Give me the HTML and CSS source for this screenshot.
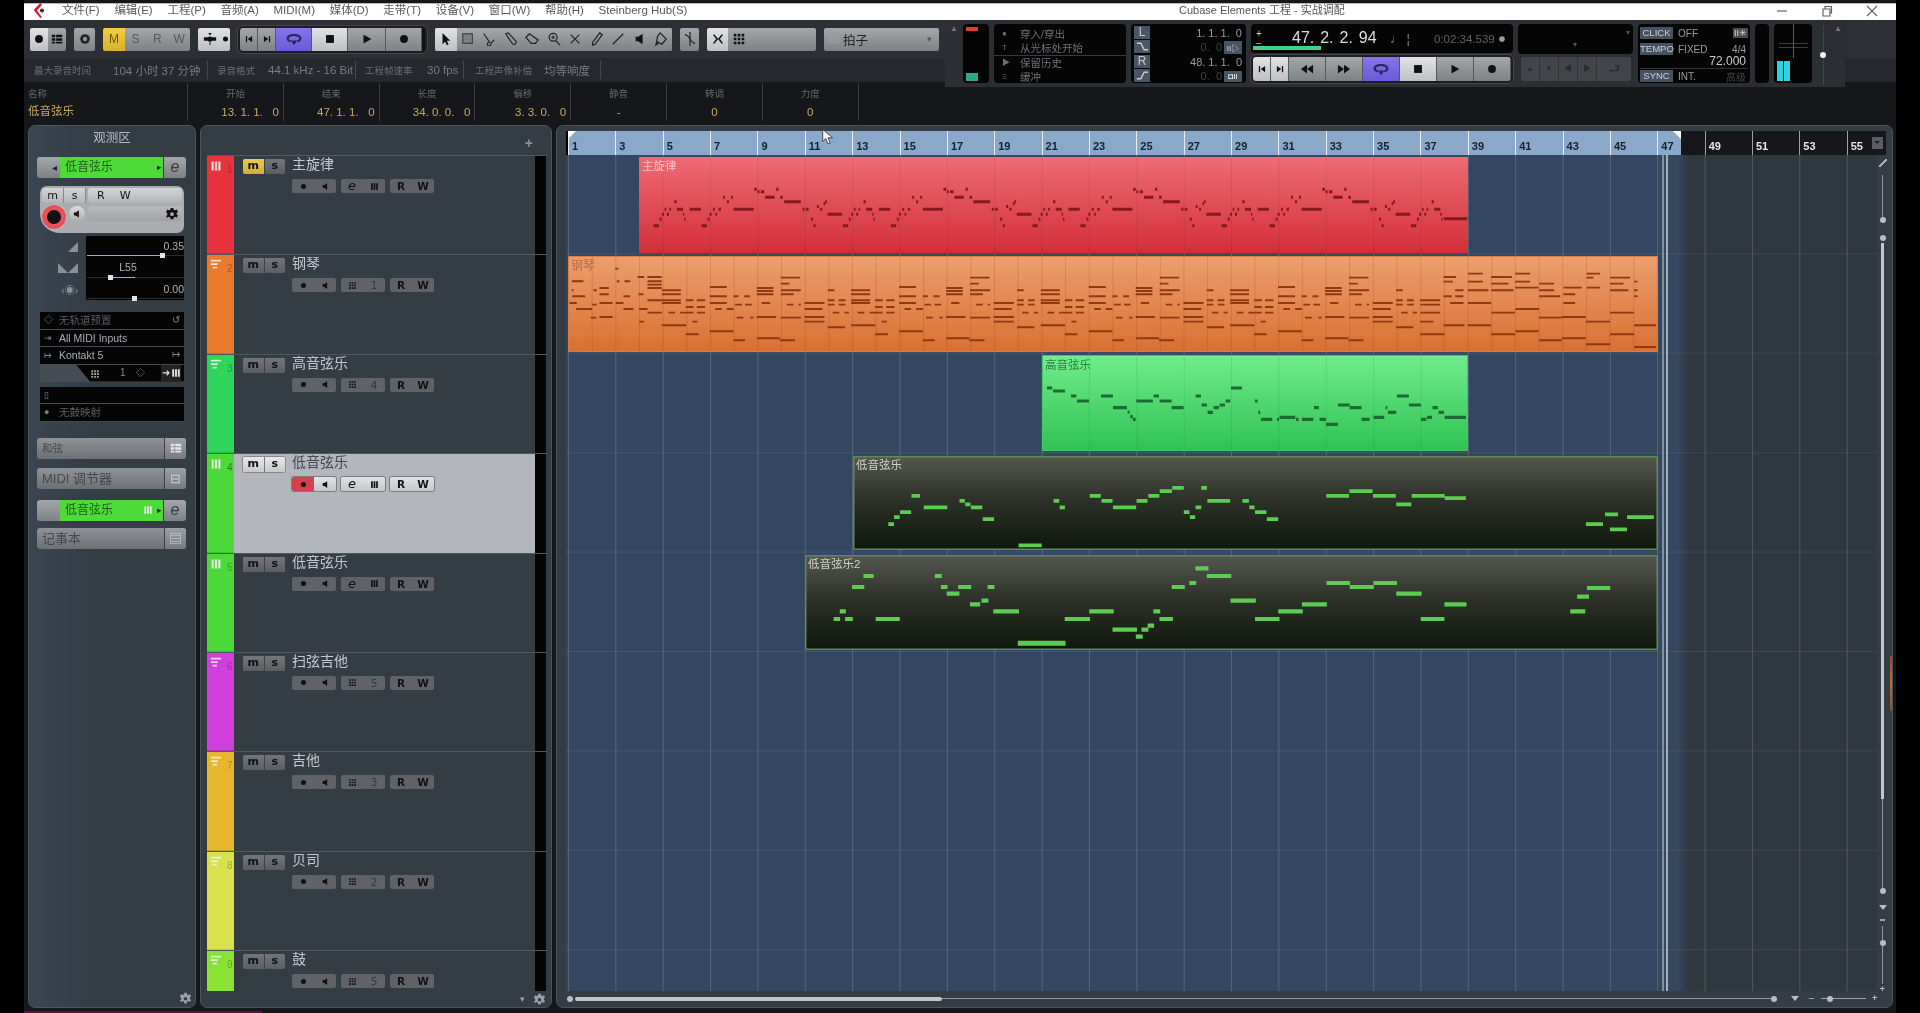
FILE: index.html
```html
<!DOCTYPE html>
<html lang="zh-CN">
<head>
<meta charset="utf-8">
<title>Cubase Elements 工程 - 实战调配</title>
<link rel="stylesheet" href="styles.css">
</head>
<body>
<svg class="sprite" aria-hidden="true">
  <symbol id="rec" viewBox="0 0 16 16"><circle cx="8" cy="8" r="4.5"/></symbol>
  <symbol id="stop" viewBox="0 0 16 16"><rect x="3.5" y="3.5" width="9" height="9"/></symbol>
  <symbol id="play" viewBox="0 0 16 16"><path d="M4 3l9 5-9 5z"/></symbol>
  <symbol id="prev" viewBox="0 0 16 16"><path d="M3 3h2v10H3zM13 3v10L6 8z"/></symbol>
  <symbol id="next" viewBox="0 0 16 16"><path d="M13 3h-2v10h2zM3 3v10l7-5z"/></symbol>
  <symbol id="rew" viewBox="0 0 16 16"><path d="M8 3v10L1 8zM15 3v10L8 8z"/></symbol>
  <symbol id="ff" viewBox="0 0 16 16"><path d="M8 3v10l7-5zM1 3v10l7-5z"/></symbol>
  <symbol id="loop" viewBox="0 0 20 16"><path d="M10 2C5 2 2 4 2 7c0 2 2 3.500 4 4l1-2C5.500 8.600 4.500 8 4.500 7c0-1.500 2.500-2.700 5.500-2.700s5.500 1.200 5.500 2.700c0 1-1 1.600-2.500 2l1 2c2-.5 4-2 4-4 0-3-3-5-8-5zM6.500 9h7L10 14z"/></symbol>
  <symbol id="mon" viewBox="0 0 16 16"><path d="M11 2v12L6 10.500H3v-5h3z"/></symbol>
  <symbol id="keys" viewBox="0 0 16 16"><path d="M2 2h3v12H2zM6.500 2h3v12h-3zM11 2h3v12h-3z"/></symbol>
  <symbol id="grid" viewBox="0 0 16 16"><path d="M2 2h3v3H2zM6.500 2h3v3h-3zM11 2h3v3h-3zM2 6.500h3v3H2zM6.500 6.500h3v3h-3zM11 6.500h3v3h-3zM2 11h3v3H2zM6.500 11h3v3h-3zM11 11h3v3h-3z"/></symbol>
  <symbol id="lines" viewBox="0 0 14 16"><path d="M1 2h12v2H1zM1 6h8v2H1zM3 10h5v2H3z"/></symbol>
  <symbol id="gear" viewBox="0 0 16 16"><path fill-rule="evenodd" d="M6.500 1h3l.4 2 1.700.8 1.800-1 1.500 2.500-1.500 1.200v2l1.500 1.200-1.500 2.500-1.800-1-1.700.8-.4 2h-3l-.4-2-1.700-.8-1.800 1L1.100 10.700l1.500-1.200v-2L1.100 5.300l1.500-2.500 1.800 1 1.700-.8zM8 6a2.200 2.200 0 100 4.400A2.200 2.200 0 008 6z"/></symbol>
  <symbol id="pointer" viewBox="0 0 16 16"><path d="M4 1v13l3-3 2 4 2-1-2-4h4z"/></symbol>
  <symbol id="bars" viewBox="0 0 16 16"><path d="M2 3h4v3H2zM7 3h7v3H7zM2 7h4v3H2zM7 7h7v3H7zM2 11h4v2H2zM7 11h7v2H7z"/></symbol>
</svg>

<div class="app">
  <header class="titlebar">
    <svg class="logo" viewBox="0 0 16 18"><path class="logo-red" d="M9 0L1 8.500 9 18l2-1-6-8 6-7z"/><circle class="logo-dark" cx="11" cy="9" r="2.500"/></svg>
    <nav class="menu">
      <span>文件(F)</span><span>编辑(E)</span><span>工程(P)</span><span>音频(A)</span><span>MIDI(M)</span><span>媒体(D)</span><span>走带(T)</span><span>设备(V)</span><span>窗口(W)</span><span>帮助(H)</span><span>Steinberg Hub(S)</span>
    </nav>
    <div class="doc-title">Cubase Elements 工程 - 实战调配</div>
    <div class="win">
      <svg viewBox="0 0 12 12"><path d="M1 6h10"/></svg>
      <svg viewBox="0 0 12 12"><path d="M2 4h7v7H2zM4 4V1.500h6.500V8H9"/></svg>
      <svg viewBox="0 0 12 12"><path d="M1 1l10 10M11 1L1 11"/></svg>
    </div>
  </header>

  <section class="toolbar">
    <div class="tg g1"><b class="lt"><svg class="ic"><use href="#rec"/></svg></b><b class="md"><svg class="ic"><use href="#bars"/></svg></b></div>
    <div class="tg g2"><b class="md"><svg class="ic ring" viewBox="0 0 16 16"><circle cx="8" cy="8" r="5.500"/><circle class="f" cx="8" cy="8" r="2.500"/></svg></b></div>
    <div class="tg g3"><b class="yl">M</b><b class="md txt">S</b><b class="md txt">R</b><b class="md txt">W</b></div>
    <div class="tg g4"><b class="lt grow"><svg class="ic" viewBox="0 0 16 16"><path d="M6 1h4L8 4zM1 6h5v4H1zM10 6h5v4h-5zM8 5a3 3 0 110 6 3 3 0 010-6zM7.500 11h1v4h-1z"/></svg></b><b class="lt s"><svg class="ic small"><use href="#rec"/></svg></b></div>
    <div class="transport-frame tf1">
      <b class="md w18"><svg class="ic small"><use href="#prev"/></svg></b><b class="md w18"><svg class="ic small"><use href="#next"/></svg></b><b class="pu w36"><svg class="ic wide"><use href="#loop"/></svg></b><b class="lt w36"><svg class="ic"><use href="#stop"/></svg></b><b class="md w38"><svg class="ic"><use href="#play"/></svg></b><b class="md w36"><svg class="ic"><use href="#rec"/></svg></b>
    </div>
    <div class="tg tools">
      <b class="lt w22"><svg class="ic"><use href="#pointer"/></svg></b>
      <b class="md"><svg class="ic st" viewBox="0 0 16 16"><rect class="f2" x="2" y="2" width="11" height="11"/></svg></b>
      <b class="md"><svg class="ic st" viewBox="0 0 16 16"><path d="M2 2l7 10M14 9l-4 4a2 2 0 11-1-1"/></svg></b>
      <b class="md"><svg class="ic st" viewBox="0 0 16 16"><path d="M2 2l3-1 9 10-1 3-3 0z"/></svg></b>
      <b class="md"><svg class="ic st" viewBox="0 0 16 16"><path d="M1 6l4-4 10 7-3 4H7z"/></svg></b>
      <b class="md"><svg class="ic st" viewBox="0 0 16 16"><circle cx="7" cy="6" r="4.500"/><path d="M10 10l5 5M5 6h4M7 4v4"/></svg></b>
      <b class="md"><svg class="ic st" viewBox="0 0 16 16"><path d="M3 3l10 10M13 3L3 13"/></svg></b>
      <b class="md"><svg class="ic st" viewBox="0 0 16 16"><path d="M11 1l3 2-8 11-3 1 0-3z"/></svg></b>
      <b class="md"><svg class="ic st" viewBox="0 0 16 16"><path d="M2 14L14 2"/></svg></b>
      <b class="md"><svg class="ic"><use href="#mon"/></svg></b>
      <b class="md"><svg class="ic st" viewBox="0 0 16 16"><path d="M7 1l7 7-5 6-6-3 1-6zM3 11l-1 4 3-2"/></svg></b>
    </div>
    <div class="tg g7"><b class="md"><svg class="ic st" viewBox="0 0 16 16"><path d="M8 0v16M2 3c6 0 6 10 12 10"/></svg></b></div>
    <div class="tg g8"><b class="lt w21"><svg class="ic st2" viewBox="0 0 16 16"><path d="M3 3l4 5-4 5M13 3L9 8l4 5"/></svg></b><b class="md w21"><svg class="ic"><use href="#grid"/></svg></b><b class="md grow fade">⊟ ⊖ ⊤ ▾</b></div>
    <div class="dropdown"><svg class="ic pale"><use href="#grid"/></svg><span>拍子</span><i>▾</i></div>
  </section>

  <section class="statusbar">
    <span class="lb">最大录音时间</span><span class="vl">104 小时 37 分钟</span><u></u>
    <span class="lb">录音格式</span><span class="vl">44.1 kHz - 16 Bit</span><u></u>
    <span class="lb">工程帧速率</span><span class="vl">30 fps</span><u></u>
    <span class="lb">工程声像补偿</span><span class="vl">均等响度</span><u></u>
  </section>

  <section class="infobar">
    <div class="cell first"><small>名称</small><strong>低音弦乐</strong></div>
    <div class="cell"><small>开始</small><strong>13. 1. 1.&nbsp;&nbsp; 0</strong></div>
    <div class="cell"><small>结束</small><strong>47. 1. 1.&nbsp;&nbsp; 0</strong></div>
    <div class="cell"><small>长度</small><strong>34. 0. 0.&nbsp;&nbsp; 0</strong></div>
    <div class="cell"><small>偏移</small><strong>3. 3. 0.&nbsp;&nbsp; 0</strong></div>
    <div class="cell mid"><small>静音</small><strong>-</strong></div>
    <div class="cell mid"><small>转调</small><strong>0</strong></div>
    <div class="cell mid"><small>力度</small><strong>0</strong></div>
  </section>

  <aside class="transport">
    <i class="up">▲</i>
    <div class="box vu"><em class="vu-red"></em><em class="vu-green"></em></div>
    <div class="box markers">
      <p><i>●</i>穿入/穿出</p><p><i>T</i>从光标处开始</p><hr>
      <p><i>▶</i>保留历史</p><p><i>Ξ</i>缓冲</p>
    </div>
    <div class="box locators">
      <div class="lrow"><span class="tag">L</span><span class="tc">1. 1. 1.&nbsp; 0</span></div>
      <div class="lrow dim"><span class="tag"><svg class="ic st2" viewBox="0 0 16 16"><path d="M1 4h5l4 8h5"/></svg></span><span class="tc">0.&nbsp; 0</span><span class="mini">II▷</span></div>
      <div class="lrow sep"><span class="tag">R</span><span class="tc">48. 1. 1.&nbsp; 0</span></div>
      <div class="lrow dim"><span class="tag"><svg class="ic st2" viewBox="0 0 16 16"><path d="M1 12h5l4-8h5"/></svg></span><span class="tc">0.&nbsp; 0</span><span class="mini lit">◘II</span></div>
    </div>
    <div class="maincol">
      <div class="box readout">
        <span class="pm">+<br>−</span><span class="big">47. 2. 2. 94</span><span class="nt">♩ ¦</span><span class="secs">0:02:34.539</span><svg class="ic small pale"><use href="#rec"/></svg>
        <em class="progress"></em>
      </div>
      <div class="transport-frame tf2">
        <b class="lt w18"><svg class="ic small"><use href="#prev"/></svg></b><b class="lt w18"><svg class="ic small"><use href="#next"/></svg></b><b class="md w37"><svg class="ic"><use href="#rew"/></svg></b><b class="md w37"><svg class="ic"><use href="#ff"/></svg></b><b class="pu w37"><svg class="ic wide"><use href="#loop"/></svg></b><b class="lt w37"><svg class="ic"><use href="#stop"/></svg></b><b class="md w37"><svg class="ic"><use href="#play"/></svg></b><b class="md w37"><svg class="ic"><use href="#rec"/></svg></b>
      </div>
    </div>
    <div class="sidecol">
      <div class="box arrows"><i>▾</i><i class="c">▾</i></div>
      <div class="darkbtns"><b>▲</b><b>▼</b><b>◀</b><b>▶</b><b class="wide2">⮐</b></div>
    </div>
    <div class="box clicks">
      <div class="crow"><span class="ctag">CLICK</span><span>OFF</span><span class="ckey">II✳</span></div>
      <div class="crow tempo"><span class="ctag">TEMPO</span><span>FIXED</span><span class="fr">4/4</span></div>
      <div class="bpm">72.000</div>
      <div class="crow sync"><span class="ctag">SYNC</span><span>INT.</span><span class="fr dimmer">高级</span></div>
    </div>
    <div class="box blank"></div>
    <div class="box outmeter"><em></em><em></em></div>
    <div class="vol"><em></em></div>
    <i class="up">▲</i>
  </aside>

  <main class="work">
    <aside class="panel inspector">
      <h2>观测区</h2>
      <div class="irow"><span class="tab dgray">◂</span><span class="greenlab">低音弦乐<i>▸</i></span><span class="tab e">e</span></div>
      <div class="channel">
        <div class="ch-ms"><b>m</b><b>s</b></div>
        <div class="ch-rw"><b>R</b><b>W</b></div>
        <div class="ch-rec"><span class="bigrec"></span><span class="mon"><svg class="ic small"><use href="#mon"/></svg></span></div>
        <div class="ch-bar"><svg class="ic"><use href="#gear"/></svg></div>
      </div>
      <div class="faders">
        <div class="fcol"><span>◢</span><span>◣◢</span><span>‹◉›</span></div>
        <div class="fbox">
          <div class="fd"><span class="fv">0.35</span><div class="tr"><em class="fill f1"></em></div></div>
          <div class="fd"><span class="fv ctr">L55</span><div class="tr"><em class="fill f2b"></em></div></div>
          <div class="fd"><span class="fv">0.00</span><div class="tr"><em class="fill f3"></em></div></div>
        </div>
      </div>
      <div class="ilist">
        <div class="li dimt"><i>◇</i>无轨道预置<span>↺</span></div>
        <div class="li"><i>⇥</i>All MIDI Inputs</div>
        <div class="li"><i>↦</i>Kontakt 5<span>↦</span></div>
        <div class="li notch"><svg class="ic small pale"><use href="#grid"/></svg><span class="n">1</span><i>◇</i><span class="arrowk">➜<svg class="ic small wt"><use href="#keys"/></svg></span></div>
      </div>
      <div class="ilist second">
        <div class="li"><i>▯</i></div>
        <div class="li dimt"><i>●</i>无鼓映射</div>
      </div>
      <div class="sec sm"><span>和弦</span><b><svg class="ic wt"><use href="#bars"/></svg></b></div>
      <div class="sec"><span>MIDI 调节器</span><b>⊟</b></div>
      <div class="irow sec-g"><span class="tab"></span><span class="greenlab">低音弦乐<svg class="ic small wt"><use href="#keys"/></svg><i>▸</i></span><span class="tab e">e</span></div>
      <div class="sec after-g"><span>记事本</span><b>▤</b></div>
      <svg class="ic gear in-g"><use href="#gear"/></svg>
    </aside>

    <section class="panel tracks">
      <div class="th"><span>+</span></div>
      <div class="tlist">
        <article class="track"><div class="strip c1"><svg class="ic si"><use href="#keys"/></svg><span>1</span></div><div class="tc-body"><div class="r1"><div class="ms"><b class="on">m</b><b>s</b></div><span class="tname">主旋律</span></div><div class="r2"><div class="bt"><b><svg class="ic small"><use href="#rec"/></svg></b><b><svg class="ic small"><use href="#mon"/></svg></b></div><div class="bt"><b class="lc">e</b><b><svg class="ic small"><use href="#keys"/></svg></b></div><div class="bt"><b>R</b><b>W</b></div></div></div><div class="tblack"></div></article>
        <article class="track"><div class="strip c2"><svg class="ic si"><use href="#lines"/></svg><span>2</span></div><div class="tc-body"><div class="r1"><div class="ms"><b>m</b><b>s</b></div><span class="tname">钢琴</span></div><div class="r2"><div class="bt"><b><svg class="ic small"><use href="#rec"/></svg></b><b><svg class="ic small"><use href="#mon"/></svg></b></div><div class="bt"><b><svg class="ic small"><use href="#grid"/></svg></b><b class="num">1</b></div><div class="bt"><b>R</b><b>W</b></div></div></div><div class="tblack"></div></article>
        <article class="track"><div class="strip c3"><svg class="ic si"><use href="#lines"/></svg><span>3</span></div><div class="tc-body"><div class="r1"><div class="ms"><b>m</b><b>s</b></div><span class="tname">高音弦乐</span></div><div class="r2"><div class="bt"><b><svg class="ic small"><use href="#rec"/></svg></b><b><svg class="ic small"><use href="#mon"/></svg></b></div><div class="bt"><b><svg class="ic small"><use href="#grid"/></svg></b><b class="num">4</b></div><div class="bt"><b>R</b><b>W</b></div></div></div><div class="tblack"></div></article>
        <article class="track sel"><div class="strip c4"><svg class="ic si"><use href="#keys"/></svg><span>4</span></div><div class="tc-body"><div class="r1"><div class="ms"><b>m</b><b>s</b></div><span class="tname">低音弦乐</span></div><div class="r2"><div class="bt"><b class="armed"><svg class="ic small"><use href="#rec"/></svg></b><b><svg class="ic small"><use href="#mon"/></svg></b></div><div class="bt"><b class="lc">e</b><b><svg class="ic small"><use href="#keys"/></svg></b></div><div class="bt"><b>R</b><b>W</b></div></div></div><div class="tblack"></div></article>
        <article class="track"><div class="strip c4"><svg class="ic si"><use href="#keys"/></svg><span>5</span></div><div class="tc-body"><div class="r1"><div class="ms"><b>m</b><b>s</b></div><span class="tname">低音弦乐</span></div><div class="r2"><div class="bt"><b><svg class="ic small"><use href="#rec"/></svg></b><b><svg class="ic small"><use href="#mon"/></svg></b></div><div class="bt"><b class="lc">e</b><b><svg class="ic small"><use href="#keys"/></svg></b></div><div class="bt"><b>R</b><b>W</b></div></div></div><div class="tblack"></div></article>
        <article class="track"><div class="strip c6"><svg class="ic si"><use href="#lines"/></svg><span>6</span></div><div class="tc-body"><div class="r1"><div class="ms"><b>m</b><b>s</b></div><span class="tname">扫弦吉他</span></div><div class="r2"><div class="bt"><b><svg class="ic small"><use href="#rec"/></svg></b><b><svg class="ic small"><use href="#mon"/></svg></b></div><div class="bt"><b><svg class="ic small"><use href="#grid"/></svg></b><b class="num">5</b></div><div class="bt"><b>R</b><b>W</b></div></div></div><div class="tblack"></div></article>
        <article class="track"><div class="strip c7"><svg class="ic si"><use href="#lines"/></svg><span>7</span></div><div class="tc-body"><div class="r1"><div class="ms"><b>m</b><b>s</b></div><span class="tname">吉他</span></div><div class="r2"><div class="bt"><b><svg class="ic small"><use href="#rec"/></svg></b><b><svg class="ic small"><use href="#mon"/></svg></b></div><div class="bt"><b><svg class="ic small"><use href="#grid"/></svg></b><b class="num">3</b></div><div class="bt"><b>R</b><b>W</b></div></div></div><div class="tblack"></div></article>
        <article class="track"><div class="strip c8"><svg class="ic si"><use href="#lines"/></svg><span>8</span></div><div class="tc-body"><div class="r1"><div class="ms"><b>m</b><b>s</b></div><span class="tname">贝司</span></div><div class="r2"><div class="bt"><b><svg class="ic small"><use href="#rec"/></svg></b><b><svg class="ic small"><use href="#mon"/></svg></b></div><div class="bt"><b><svg class="ic small"><use href="#grid"/></svg></b><b class="num">2</b></div><div class="bt"><b>R</b><b>W</b></div></div></div><div class="tblack"></div></article>
        <article class="track"><div class="strip c9"><svg class="ic si"><use href="#lines"/></svg><span>9</span></div><div class="tc-body"><div class="r1"><div class="ms"><b>m</b><b>s</b></div><span class="tname">鼓</span></div><div class="r2"><div class="bt"><b><svg class="ic small"><use href="#rec"/></svg></b><b><svg class="ic small"><use href="#mon"/></svg></b></div><div class="bt"><b><svg class="ic small"><use href="#grid"/></svg></b><b class="num">5</b></div><div class="bt"><b>R</b><b>W</b></div></div></div><div class="tblack"></div></article>
      </div>
      <div class="tfoot"><i>▾</i><svg class="ic gear"><use href="#gear"/></svg></div>
    </section>

    <section class="panel project">
      <div class="ruler">
        <span>1</span><span>3</span><span>5</span><span>7</span><span>9</span><span>11</span><span>13</span><span>15</span><span>17</span><span>19</span><span>21</span><span>23</span><span>25</span><span>27</span><span>29</span><span>31</span><span>33</span><span>35</span><span>37</span><span>39</span><span>41</span><span>43</span><span>45</span><span>47</span><span class="dk">49</span><span class="dk">51</span><span class="dk">53</span><span class="dk">55</span>
        <i class="loc-l"></i><i class="loc-r"></i><i class="rbtn"></i>
      </div>
      <div class="pbody">
        <div class="canvas">
          <div class="part red"><label>主旋律</label>
            <svg class="notes n-red" viewBox="638.7 156.7 829.3 95.6">
              <defs>
                <path id="ma" d="M280 316H296M298 296H304M305 281H311M313 266H318M320 281H326M327 266H332M342 244H349M350 266H368M368 281H372M372 296H376"/>
                <path id="mb" d="M388 266H422M424 316H440M442 296H448M448 281H454M458 266H464M465 281H470M475 266H482M488 230H494M500 244H506M512 230H518M520 266H580M582 206H590M592 214H598M602 214H612M615 230H643M648 206H655M660 230H668M672 244H722M727 266H733M737 266H745M752 296H758M760 316H766M770 258H776M780 266H786M790 250H795M795 244H800M802 281H846"/>
              </defs>
              <g transform="translate(560 120) scale(.3333)">
                <use href="#ma"/><use href="#mb"/>
                <use href="#ma" x="568"/><use href="#mb" x="568"/>
                <use href="#ma" x="1137"/><use href="#mb" x="1137"/>
                <use href="#ma" x="1705"/><use href="#mb" x="1705"/>
                <use href="#ma" x="2273"/>
                <path d="M2652 295H2722"/>
              </g>
            </svg>
          </div>
          <div class="part orange"><label>钢琴</label>
            <svg class="notes n-org" viewBox="568 255.7 1089.7 96">
              <defs>
                <path id="pm" d="M305 510H362M305 522H362M305 540H362M305 548H362M325 577H345M305 615H378M377 540H400M410 540H435M377 560H400M410 560H435M360 577H400M410 577H435M397 604H412M377 642H415M449 500H500M449 528H500M449 548H500M465 566H485M449 633H520M520 528H535M552 528H570M525 553H545M555 553H575M500 566H520M530 592H550M570 592H580M520 660H555M590 503H640M590 512H640M590 522H640M605 548H630M590 590H648M590 654H660M662 472H720M662 490H688M662 510H722M662 522H700M680 553H700M715 553H722M662 592H722M660 660H705M733 548H793M733 566H787M733 590H793M733 604H793M803 510H823M803 540H823M836 540H856M803 553H823M836 553H856M818 577H838M853 577H866M803 621H855"/>
              </defs>
              <g transform="translate(560 120) scale(.3333)">
                <path d="M35 483H70M35 510H40M36 528H75M28 548H50M48 566H96M95 553H110M92 592H108M118 503H146M118 522H146M118 548H157M118 590H157M100 510H110M165 445H175M167 548H190M190 566H220M170 483H178M193 483H210M190 528H210M232 470H252M262 470H305M262 483H305M262 493H305M262 503H305M262 540H305M237 566H262M262 577H305M237 604H252M235 522H250"/>
                <use href="#pm"/><use href="#pm" x="568"/><use href="#pm" x="1137"/><use href="#pm" x="1705"/>
              </g>
              <g transform="translate(1400 120) scale(.3333)">
                <path d="M60 540H120M60 553H120M60 577H120M60 604H100M60 642H133M130 470H168M130 484H158M130 528H155M165 510H190M165 528H190M150 548H190M130 615H193M203 460H248M203 484H248M203 510H265M203 548H273M203 615H273M273 470H335M273 490H325M273 510H340M273 577H345M273 642H345M345 460H390M345 484H390M345 502H415M345 566H417M345 633H415M417 490H462M417 510H462M417 528H480M417 592H485M417 660H485M490 502H545M490 522H525M490 548H525M485 590H557M485 654H557M560 460H600M560 472H580M560 502H600M557 604H630M557 672H630M630 472H690M630 490H670M630 510H685M630 577H702M630 642H702M702 484H712M702 510H712M702 528H712M702 615H768M702 680H768"/>
              </g>
            </svg>
          </div>
          <div class="part green"><label>高音弦乐</label>
            <svg class="notes n-grn" viewBox="1041.7 355 426 96">
              <g transform="translate(1030 350) scale(.3333)">
                <path d="M50 114H66M68 123H104M122 138H138M140 153H176M212 138H248M248 173H290M292 186H298M300 200H308M308 208H316M318 153H368M370 138H386M388 153H424M424 173H460M496 138H512M514 165H530M532 187H548M550 173H566M568 165H584M586 153H600M602 114H635M674 153H682M684 187H690M692 208H726M740 208H746M748 202H795M797 208H805M815 208H849M851 173H866M868 208H887M887 223H923M923 165H958M958 173H994M994 208H1018M1030 202H1062M1066 173H1071M1073 187H1098M1100 138H1136M1136 165H1172M1172 208H1188M1190 202H1205M1207 173H1223M1225 187H1241M1243 202H1307"/>
              </g>
            </svg>
          </div>
          <div class="part dark p4"><label>低音弦乐</label>
            <svg class="notes n-b4" viewBox="853 455.700 804.700 94.300">
              <g transform="translate(800 450) scale(.4083 .3333)">
                <path d="M213 222H227M227 201H241M242 186H269M270 137H291M300 172H358M388 152H401M402 163H415M416 172H444M445 207H473M533 286H590M619 152H633M634 172H647M708 137H735M737 152H764M765 172H822M823 152H850M852 137H879M880 123H910M911 113H939M939 186H953M954 201H967M968 172H982M982 113H996M997 152H1053M1083 152H1099M1100 172H1113M1114 186H1142M1143 207H1171M1289 137H1345M1346 123H1403M1404 137H1460M1461 163H1498M1499 137H1580M1580 144H1632M1927 222H1969M1974 193H2006M1986 238H2028M2028 201H2094"/>
              </g>
            </svg>
          </div>
          <div class="part dark p5"><label>低音弦乐2</label>
            <svg class="notes n-b5" viewBox="805 555 852.700 95">
              <g transform="translate(800 450) scale(.4083 .3333)">
                <path d="M82 507H98M97 484H112M110 507H129M127 411H157M155 378H180M185 507H244M330 378H347M345 411H361M359 431H390M387 411H419M416 463H441M444 452H461M459 411H476M473 484H536M648 507H710M708 484H768M765 539H825M822 560H839M836 539H853M851 527H867M865 484H882M880 507H913M910 411H942M953 399H970M968 355H1000M996 378H1056M1054 452H1116M1114 507H1174M1171 484H1231M1229 463H1290M1289 399H1347M1346 411H1405M1404 399H1462M1460 431H1522M1520 507H1578M1578 463H1632M1886 484H1923M1903 440H1932M1927 414H1984"/>
                <path class="thick" d="M533 580H650"/>
              </g>
            </svg>
          </div>
          <i class="lline a"></i><i class="lline b"></i>
        </div>
        <div class="vscroll">
          <i class="pen"></i><i class="thin h45"></i><i class="dot"></i><i class="dot m10"></i><i class="thickv"></i><i class="thin h85"></i><i class="dot"></i><i class="tri m8"></i><i class="mn"></i><i class="thin h15 m2"></i><i class="dot"></i><i class="thin h38"></i><i class="pl">+</i>
        </div>
      </div>
      <div class="hscroll">
        <i class="dot"></i><i class="thick-h"></i><i class="thin-h"></i><i class="dot"></i><i class="tri m14"></i><i class="mh"></i><i class="zoomline"><em class="dot"></em></i><span class="pl">+</span>
      </div>
    </section>
  </main>
  <i class="taskstrip"></i>
  <svg class="cursor" viewBox="0 0 16 22"><path d="M1 1v16l4-4 3 7 3-1-3-7h6z"/></svg>
</div>
</body>
</html>
```

FILE: styles.css
```css
*{box-sizing:border-box}
html,body{margin:0;height:100%;background:#000;overflow:hidden}
body{font-family:"Liberation Sans","Noto Sans CJK SC",sans-serif;color:#aaa}
.sprite{display:none}
i{font-style:normal}
em{font-style:normal}
b{font-weight:400}

.app{position:relative;margin-left:24px;width:1872px;height:1013px;background:#15171a;display:flex;flex-direction:column;filter:blur(.45px);overflow:hidden}

/* title bar */
.titlebar{margin-top:3px;height:17px;flex:none;background:#fff;border-top:1px solid #b5b5b5;display:flex;align-items:center;color:#5a5a5a;font-size:11.5px}
.logo{width:15px;height:15px;margin:-4px 0 0 8px}
.logo-red{fill:#c8202c}
.logo-dark{fill:#333}
.menu{display:flex;gap:14.700px;margin:-2px 0 0 15px;align-self:flex-start;align-items:baseline;line-height:17px}
.menu span{white-space:nowrap}
.doc-title{position:absolute;left:1155px;top:2px;font-size:11px;line-height:17px;color:#555}
.win{margin-left:auto;display:flex;gap:33px;padding-right:18px;margin-top:-3px}
.win svg{width:12px;height:12px;fill:none;stroke:#666;stroke-width:1.2}

/* toolbar */
.toolbar{height:38px;flex:none;background:#2c2f33;display:flex;align-items:center;gap:8px;padding-left:6px}
.tg{height:23px;display:flex;overflow:hidden;border-radius:2px}
.tg b{display:flex;align-items:center;justify-content:center}
.ic{width:14px;height:14px;fill:#111}
.ic.small{width:10px;height:10px}
.ic.wide{width:20px;height:15px}
.ic.pale{fill:#9b9ea2}
.ic.wt{fill:#e6e6e6}
.ic.st{fill:none;stroke:#222;stroke-width:1.400}
.ic.st2{fill:none;stroke:#111;stroke-width:1.8}
.ring{fill:#222}
.ring .f{fill:#8b8e92}
.f2{fill:#7b7e82;stroke:#444}
.lt{background:linear-gradient(#e2e3e5,#bdbfc3)}
.md{background:linear-gradient(#a4a7aa,#7e8185)}
.yl{background:linear-gradient(#f0cd45,#d9b02b);color:#6a5510;font-size:12px}
.pu{background:linear-gradient(#8574ea,#6c59d6)}
.pu .ic{fill:#2c2560}
.txt{color:#55585c;font-size:12px}
.grow{flex:1}
.s{width:9px}
.g1{width:36px}.g1 b{flex:1}
.g2{width:21px}.g2 b{flex:1}
.g3{width:87px}.g3 b{flex:1}
.g4{width:32px}
.tools{width:237px;background:#8a8d90}
.tools b{width:21.500px}
.tools .w22{width:22px}
.g7{width:19px}.g7 b{flex:1}
.g8{width:109px}
.w21{width:21px}
.fade{color:#8e9195;font-size:10px;white-space:nowrap}
.dropdown{width:115px;height:23px;border-radius:2px;background:linear-gradient(#a4a7aa,#7e8185);display:flex;align-items:center;padding:0 7px 0 4px;gap:3px;color:#222;font-size:12.500px}
.dropdown .ic{width:12px;height:12px}
.dropdown i{margin-left:auto;color:#555;font-size:9px}
.transport-frame{display:flex;background:#111;border:2px solid #1b1d20;outline:1px solid #42464b;border-radius:5px;overflow:hidden}
.transport-frame b{display:flex;align-items:center;justify-content:center;border-right:1px solid #55585c}
.tf1{width:189px;height:27px}
.tf2{height:28px;padding:0}
.w18{width:18px}.w36{width:36px}.w37{width:37px}.w38{width:38px}

/* status + info */
.statusbar{height:24px;flex:none;background:#25282c;display:grid;grid-template-columns:79px 94px 10px 51px 87px 10px 62px 36px 12px 69px 56px 1px;align-items:center;padding-left:10px;white-space:nowrap}
.statusbar .lb{font-size:9.500px;color:#6b6e72}
.statusbar .vl{font-size:11.500px;color:#787b7f}
.statusbar u{display:block;width:1px;height:18px;background:#44474b}
.infobar{height:43px;flex:none;background:#15171a;display:grid;grid-template-columns:160px repeat(7,95.800px);padding-left:4px}
.cell{margin:1px 0 4px;border-right:1px solid #3a3c40;display:flex;flex-direction:column;align-items:center;justify-content:space-between;padding:3px 4px 3px}
.cell small{font-size:9.500px;color:#66686c}
.cell strong{font-weight:400;font-size:11.500px;color:#c9a868;white-space:nowrap;align-self:flex-end;padding-right:0}
.cell.first{align-items:flex-start;padding-left:0}
.cell.first strong{align-self:flex-start;font-size:11.500px}
.cell.mid strong{align-self:center}

/* transport panel (overlaps status + info) */
.transport{position:absolute;left:921px;top:20px;width:900px;height:67px;background:#2b2e32;display:flex;gap:5px;padding:4px 0 0 18px}
.up{position:absolute;left:2px;top:4px;font-size:8px;color:#777;width:14px;text-align:center}
.up:last-child{left:auto;right:0}
.box{background:#050505;border-radius:4px;height:59px}
.vu{width:26px;position:relative}
.vu-red{position:absolute;left:3px;top:3px;width:12px;height:4px;background:#d6413c}
.vu-green{position:absolute;left:3px;top:49px;width:12px;height:8px;background:#2ea882}
.markers{width:132px;font-size:10.500px;color:#6e7073;padding:3px 0 0}
.markers p{margin:0;height:14px;line-height:14px;padding-left:26px;position:relative;white-space:nowrap}
.markers i{position:absolute;left:8px;font-size:8px}
.markers hr{border:0;border-top:1px solid #3a3c40;margin:0}
.locators{width:115px;padding:2px}
.lrow{height:14px;display:flex;align-items:center;justify-content:flex-end;gap:2px;font-size:11px;color:#9a9a9a;position:relative;padding-right:2px}
.lrow .tag{position:absolute;left:1px;top:0;width:16px;height:13px;background:#4b5664;color:#c0c6ce;text-align:center;font-size:12px;line-height:13px}
.lrow .tag .ic{width:13px;height:13px}
.lrow .tag .ic.st2{stroke:#c8cdd3}
.lrow.dim{color:#3f4144}
.lrow.sep{margin-top:1px}
.mini{background:#4a5564;color:#d0d4d8;font-size:8px;padding:1px 1px;width:18px;text-align:center;white-space:nowrap;overflow:hidden}
.mini.lit{color:#fff}
.maincol{width:262px;display:flex;flex-direction:column;gap:2px}
.readout{height:29px;position:relative;display:flex;align-items:center;padding-left:5px;color:#ddd}
.pm{font-size:10px;line-height:10px;width:36px;color:#c9c9c9}
.big{font-size:16px;width:98px;white-space:nowrap;word-spacing:1.500px;margin-top:-2px}
.nt{font-size:13px;color:#888;width:44px}
.secs{font-size:11.500px;color:#5f6164;width:63px}
.progress{position:absolute;left:2px;top:22px;width:68px;height:4px;background:#3fd28a}
.sidecol{width:115px;display:flex;flex-direction:column;gap:3px}
.arrows{height:30px;position:relative;font-size:8px;color:#555}
.arrows i{position:absolute;right:3px;top:4px}
.arrows i.c{right:auto;left:55px;top:16px}
.darkbtns{height:24px;margin:0 2px 0 3px;display:flex;background:#414448;border-radius:2px;overflow:hidden}
.darkbtns b{width:19px;font-size:8px;line-height:24px;text-align:center;color:#2a2c2f;border-right:1px solid #333}
.darkbtns .wide2{flex:1;font-size:14px;border:0}
.clicks{width:112px;padding:3px 2px;font-size:10px;color:#9a9da1;position:relative}
.crow{height:12px;display:flex;gap:5px;align-items:center;white-space:nowrap}
.crow .fr{margin-left:auto;padding-right:2px}
.crow.tempo{margin-top:4px}
.crow.sync{border-top:1px solid #333;padding-top:1px;height:14px}
.dimmer{color:#444}
.ctag{width:33px;background:#465161;color:#c9cfd6;text-align:center;font-size:9.500px;line-height:12px;height:12px;flex:none}
.ckey{margin-left:auto;background:#4a4d52;padding:0 1px;color:#ddd;font-size:9px}
.bpm{height:13px;line-height:13px;font-size:12px;text-align:right;color:#ccc;padding-right:2px}
.blank{width:14px}
.outmeter{width:38px;position:relative;background:linear-gradient(#5a5d60,#5a5d60) 50% 0/1px 58% no-repeat,linear-gradient(#3a3c40,#3a3c40) 50% 32%/76% 1px no-repeat,linear-gradient(#3a3c40,#3a3c40) 50% 40%/76% 1px no-repeat,#050505;display:flex;gap:1px;align-items:flex-end;padding:0 0 2px 3px}
.outmeter em{width:6px;height:20px;background:#2ed3da}
.vol{width:16px;position:relative;margin-left:-1px}
.vol::before{content:"";position:absolute;left:7px;top:2px;bottom:2px;border-left:1px dotted #555}
.vol em{position:absolute;left:4px;top:28px;width:6px;height:6px;border-radius:50%;background:#eee}

/* work area */
.work{flex:1;display:flex;padding-left:4px;min-height:0;height:883px}
.panel{background:#343c44;border:1px solid #4c545c;border-radius:7px;position:relative;overflow:hidden}
.inspector{width:168px;height:883px;margin-right:4px;background:linear-gradient(90deg,#3a4552,#343c44 40%)}
.inspector h2{margin:0;height:31px;text-align:center;font-weight:400;font-size:12.500px;line-height:24px;color:#b8bcc0}
.irow{display:flex;margin-left:8px;width:149px;height:21px;border-radius:3px;overflow:hidden}
.tab{width:23px;background:linear-gradient(#a4a7aa,#7e8185);color:#222;font-size:10px;text-align:right;padding-right:3px;line-height:21px}
.tab.e{width:22px;text-align:center;padding:0;font-size:16px;line-height:20px;font-style:italic;color:#3a3a3a;margin-left:1px}
.greenlab{flex:1;background:#4edb3a;color:#1f5a1a;font-size:12px;line-height:21px;padding-left:5px;display:flex;align-items:center;gap:0}
.greenlab i{margin-left:auto;font-size:9px;color:#222;padding-right:1px}
.greenlab .ic{margin-left:auto;margin-right:4px}
.greenlab .ic + i{margin-left:0}
.channel{margin:8px 0 0 11px;width:144px;height:47px;background:#a9acb0;border-radius:7px 7px 7px 20px;display:grid;grid-template-columns:44px 1fr;grid-template-rows:17px 27px;padding:2px 2px 0 2px;column-gap:2px;position:relative}
.ch-ms,.ch-rw{display:flex;background:linear-gradient(#d3d5d7,#b2b4b7);border-radius:3px;height:15px;font:700 11px/15px "DejaVu Sans",sans-serif;color:#111}
.ch-ms b{flex:1;text-align:center;border-right:1px solid #85888c}
.ch-rw{padding-left:9px;gap:15px}
.ch-rec{display:flex;align-items:flex-start;gap:3px;position:relative}
.bigrec{width:24px;height:24px;border-radius:50%;background:#111;border:5px solid #e8505a;box-shadow:0 0 0 1px #bbb;flex:none}
.mon{width:16px;height:16px;border-radius:50%;background:linear-gradient(#ddd,#aaa);display:flex;align-items:center;justify-content:center;margin-top:1px;flex:none}
.ch-bar{height:15px;background:linear-gradient(#b8babd,#a0a3a6);border-radius:3px;display:flex;justify-content:flex-end;align-items:center;padding-right:3px;margin-top:1px}
.faders{display:flex;margin:3px 0 0 11px;width:144px;height:64px}
.fcol{width:46px;display:flex;flex-direction:column;justify-content:space-around;align-items:flex-end;padding-right:8px;font-size:10px;color:#8a9098;white-space:nowrap}
.fbox{flex:1;background:#050505;display:flex;flex-direction:column;justify-content:space-between}
.fd{height:21.300px;position:relative;text-align:right;font-size:10.500px;color:#b0b3b6;padding-top:4px}
.fv.ctr{display:block;text-align:center;padding-right:14px}
.tr{position:absolute;left:1px;right:0;bottom:1px;height:1px;background:#2c2c2c}
.fill{position:absolute;top:0;height:1px;background:#8bb6cc}
.fill::after{content:"";position:absolute;width:5px;height:5px;top:-2px;background:#e5e5e5}
.f1{left:0;width:75px}.f1::after{right:-3px}
.f2b{left:23px;width:25px}.f2b::after{left:-2px}
.f3{left:47px;width:1px;bottom:0}.f3::after{left:-2px}
.ilist{margin:12px 0 0 11px;width:144px;display:flex;flex-direction:column;gap:1px;background:#444b52}
.ilist.second{margin-top:5px;height:35px}
.li{height:16.500px;background:#050505;font-size:10.500px;line-height:16px;color:#a9acb0;padding-left:19px;position:relative;white-space:nowrap}
.li i{position:absolute;left:4px;font-size:9px;color:#7c8085}
.li>span{position:absolute;right:4px;font-size:10px;color:#888}
.li.dimt{color:#5c5f63}
.li.notch{height:17px;clip-path:polygon(36px 0,100% 0,100% 100%,50px 100%);display:flex;align-items:center;color:#888}
.li.notch>.ic{position:absolute;left:50px;top:4px}
.li.notch .n{position:absolute;left:80px;right:auto}
.li.notch i{left:96px;top:0}
.li.notch .arrowk{color:#ddd;right:3px;display:flex;align-items:center;gap:1px;background:#222;padding-left:1px}
.sec{margin:9px 0 0 8px;width:149px;height:21px;border-radius:3px;overflow:hidden;display:flex;background:linear-gradient(#8f9296,#6d7074);font-size:13px;line-height:21px;color:#45484c}
.sec span{flex:1;padding-left:5px}
.sec.sm{margin-top:16px;font-size:10.500px}
.sec b{width:22px;border-left:1px solid #3c3f43;background:linear-gradient(#9da0a4,#777a7e);text-align:center;color:#cfd2d5;display:flex;align-items:center;justify-content:center}
.irow.sec-g{margin-top:11px}
.sec.after-g{margin-top:7px}
.gear{fill:#9aa0a6;width:13px;height:13px}
.in-g{position:absolute;right:3px;bottom:2px}

.tracks{width:352px;height:883px;margin-right:4px;padding:0 4px 0 6px;display:flex;flex-direction:column}
.th{height:29px;flex:none;text-align:right;padding-right:14px;color:#8b9096;font-weight:700;font-size:14px;line-height:34px}
.tlist{height:836px;flex:none;overflow:hidden}
.track{height:99.400px;display:grid;grid-template-columns:27px 301px 11px;border-top:1px solid #50575f}
.strip{position:relative;border-bottom:1px solid rgba(0,0,0,.12)}
.strip span{position:absolute;left:20px;top:8px;font-size:10px;color:rgba(0,0,0,.28)}
.si{position:absolute;left:3px;top:3px;width:12px;height:14px;fill:#f2f2f2;opacity:.85}
.c1{background:#e8323e}.c2{background:#ea7a2e}.c3{background:#2fd45a}.c4{background:#4cd93a}.c6{background:#cf3fdc}.c7{background:#e8b72e}.c8{background:#d9e24c}.c9{background:#8ae236}
.tc-body{padding:3px 0 0 9px;background:#343c44}
.tblack{background:#050505}
.r1{display:flex;align-items:flex-start;gap:7px;height:20px}
.ms{display:flex;height:15px;width:42px;border-radius:2px;overflow:hidden;background:#6a6e73}
.ms b{flex:1;font:700 11px/14px "DejaVu Sans",sans-serif;color:#111;text-align:center;background:linear-gradient(#72767b,#5b5f64);border-right:1px solid #3e4247}
.ms b:last-child{border:0}
.ms b.on{background:linear-gradient(#eacb4d,#d0ae30)}
.tname{font-size:14px;line-height:15px;color:#c5c9cd;margin-top:-2px;white-space:nowrap}
.r2{display:flex;gap:5px;margin:0 0 0 49px}
.bt{display:flex;width:44px;height:14px;border-radius:2px;overflow:hidden;background:#5f6368}
.bt b{flex:1;display:flex;align-items:center;justify-content:center;font:700 10.500px/14px "DejaVu Sans",sans-serif;color:#111}
.bt .ic{width:9px;height:9px}
.bt .lc{font-style:italic;font-weight:400;font-size:13px;color:#111}
.bt .num{font-weight:400;color:#35383b}
.sel .tc-body{background:#b3b7bd}
.sel .tname{color:#44474b}
.sel .ms{box-shadow:0 0 0 1px #888;background:#d5d7da}
.sel .ms b{background:linear-gradient(#e8e9ea,#c6c8cb);border-color:#777}
.sel .bt{background:linear-gradient(#e2e3e5,#c4c6c9);box-shadow:0 0 0 1px #7a7d82}
.sel .armed{background:#d5404d}
.sel .strip span{color:rgba(0,0,0,.45)}
.tfoot{flex:1;display:flex;justify-content:flex-end;align-items:center;gap:8px;padding-right:1px;font-size:9px;color:#9aa0a6}

.project{width:1337px;height:883px;padding:5px 4px 0 9px}
.ruler{position:relative;display:flex;width:1320px;height:24px;padding-left:2px;overflow:hidden;background:linear-gradient(90deg,#000 2px,#8aa8c8 2px,#8aa8c8 1115px,#15171a 1115px)}
.ruler span{flex:none;width:47.360px;border-left:1px solid #e6edf4;padding:9px 0 0 3px;font:700 11px/13px "Liberation Sans",sans-serif;color:#14202c}
.ruler .dk{color:#e4e6e8;border-color:#9ea2a6}
.loc-l,.loc-r{position:absolute;top:0;width:0;height:0;border-style:solid}
.loc-l{left:2px;border-width:8px 8px 0 0;border-color:#fff transparent transparent transparent}
.loc-r{left:1107px;border-width:0 8px 8px 0;border-color:transparent #fff transparent transparent}
.rbtn{position:absolute;right:3px;top:6px;width:11px;height:12px;background:#5a5e63}
.rbtn::after{content:"";position:absolute;left:2px;top:4px;border:3.500px solid transparent;border-top-color:#222}
.pbody{display:flex;height:836px}
.canvas{position:relative;width:1311px;height:836px;overflow:hidden;
 background-image:linear-gradient(90deg,rgba(255,255,255,.16) 1px,transparent 1px),linear-gradient(rgba(255,255,255,.07) 1px,transparent 1px),linear-gradient(90deg,#344760 1112px,#2f373f 1125px);
 background-size:47.360px 100%,100% 99.400px,100% 100%;background-position:2px 0,0 -1px,0 0}
.part{position:absolute;overflow:hidden;border-radius:1px}
.part label{position:absolute;left:3px;top:2px;font-size:11.500px;line-height:15px;white-space:nowrap}
.notes{position:absolute;left:0;top:0;width:100%;height:100%;fill:none}
.notes path{vector-effect:non-scaling-stroke}
.red{left:73px;top:2px;width:829px;height:96px;background:linear-gradient(90deg,rgba(0,0,0,.08) 1px,transparent 1px) 23.700px 0/47.360px 100%,linear-gradient(#ee6b75,#d22f3a)}
.red label{color:#f5c2c5}
.n-red{stroke:#851820;stroke-width:3}
.orange{left:2px;top:101px;width:1090px;height:96px;background:linear-gradient(90deg,rgba(120,50,10,.18) 1px,transparent 1px) 0 0/23.680px 100%,linear-gradient(#ec9f6e,#d87030);box-shadow:inset 0 0 0 1px #dd7c3c}
.orange label{color:#b5703f;font-size:12px;top:3px}
.n-org{stroke:#8e3a10;stroke-width:1.900}
.green{left:476px;top:200px;width:426px;height:96px;background:linear-gradient(90deg,rgba(0,70,20,.1) 1px,transparent 1px) 47px 0/47.360px 100%,linear-gradient(#72ec8c,#2fc254);box-shadow:inset 0 0 0 1px #46c86a}
.green label{color:#2e7d46;top:3px}
.n-grn{stroke:#1e6a35;stroke-width:3.200}
.dark{background:linear-gradient(#565850,#2e3229 45%,#0e170c);box-shadow:inset 0 0 0 1.500px #5f8a58}
.dark label{color:#d0d3cc}
.p4{left:287px;top:301px;width:805px;height:94px}
.p5{left:239px;top:400px;width:853px;height:95px}
.n-b4{stroke:#5ccc53;stroke-width:3.800}
.n-b5{stroke:#5ccc53;stroke-width:4.200}
.n-b5 .thick{stroke-width:5}
.lline{position:absolute;top:0;bottom:0;width:1.500px;background:#b9c0c7}
.lline.a{left:1096px;opacity:.6}
.lline.b{left:1100px;opacity:.85}
.vscroll{width:11px;margin-left:0;display:flex;flex-direction:column;align-items:center;padding-top:4px}
.vscroll i{flex:none}
.pen{width:8px;height:8px;background:linear-gradient(135deg,transparent 42%,#aab0b6 42% 58%,transparent 58%);margin-bottom:8px}
.thin{width:1.500px;background:#8e949a}
.h45{height:42px}.h85{height:89px}.h15{height:14px}.h38{height:38px}
.dot{width:6px;height:6px;border-radius:50%;background:#b9bec3;flex:none;display:block}
.m10{margin-top:12px}
.thickv{width:3.500px;height:556px;background:#c2c6ca;margin-top:2px}
.tri{width:0;height:0;border:4.500px solid transparent;border-top:5px solid #b9bec3;border-bottom:0}
.m8{margin-top:11px}
.mn{width:5px;height:1.500px;background:#9aa0a6;margin-top:9px}
.m2{margin-top:5px}
.pl{font-size:9px;line-height:9px;color:#b9bec3;font-weight:700;margin-top:1px}
.hscroll{height:17px;display:flex;align-items:center;padding-left:1px;padding-bottom:2px}
.thick-h{width:367px;height:4px;background:#c2c6ca;border-radius:2px;margin-left:2px}
.thin-h{width:829px;height:1.500px;background:#8e949a}
.m14{margin-left:14px}
.mh{width:5px;height:1.500px;background:#9aa0a6;margin-left:10px}
.zoomline{position:relative;width:45px;height:1.500px;background:#9aa0a6;margin-left:7px}
.zoomline .dot{position:absolute;left:6px;top:-2px}
.hscroll .pl{margin:0 0 1px 6px}
.project::after{content:"";position:absolute;right:0;top:530px;width:2px;height:55px;background:linear-gradient(#9a4a3a,#c46a2a,#7a5a3a)}

.taskstrip{position:absolute;left:0;top:1011px;width:238px;height:2px;background:#5a0f3c}
.cursor{position:absolute;left:798px;top:128px;width:12px;height:18px;fill:#fff;stroke:#222;stroke-width:1}
```
